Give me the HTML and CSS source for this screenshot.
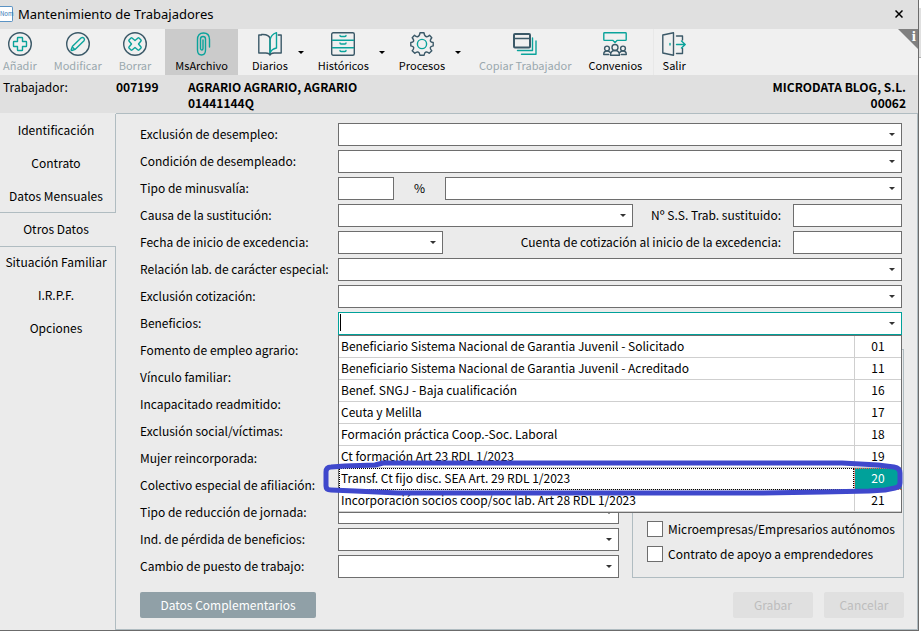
FILE: index.html
```html
<!DOCTYPE html>
<html lang="es">
<head>
    <meta charset="UTF-8">
    <meta name="viewport" content="width=device-width, initial-scale=1.0">
    <title>Mantenimiento de Trabajadores</title>
    <link rel="stylesheet" href="styles.css">
</head>
<body>
    <div class="window">
        <header class="titlebar">
            <span class="app-icon">Nom</span>
            <h1>Mantenimiento de Trabajadores</h1>
            <button class="close" aria-label="Cerrar">
                <svg width="8" height="8" viewBox="0 0 8 8"><path d="M.5.5l7 7M7.500.5l-7 7" stroke="#000" stroke-width="1.500"/></svg>
            </button>
        </header>

        <div class="toolbar">
            <button class="tool" disabled>
                <svg class="icon" viewBox="0 0 24 24"><circle class="dark" cx="12" cy="12" r="11.300"/><path class="teal" d="M10 5.500h4q.5 0 .5.5v3.500H18q.5 0 .5.5v4q0 .5-.5.5h-3.500V18q0 .5-.5.5h-4q-.5 0-.5-.5v-3.500H6q-.5 0-.5-.5v-4q0-.5.5-.5h3.500V6q0-.5.5-.5z"/></svg>
                Añadir
            </button>
            <button class="tool" disabled>
                <svg class="icon" viewBox="0 0 24 24"><circle class="dark" cx="12" cy="12" r="11.300"/><path class="teal" d="M15 6q1.500-1.200 2.800 0t.2 2.800l-8.700 8.500-3.600 1.200q-.7 0-.5-.7l1.300-3.600zM6.800 15.500l2 2"/></svg>
                Modificar
            </button>
            <button class="tool" disabled>
                <svg class="icon" viewBox="0 0 24 24"><circle class="dark" cx="12" cy="12" r="11.300"/><path class="teal" d="M9 6l3 2.500L15 6q.5-.4 1 0l2 2q.4.500 0 1l-2.500 3 2.500 3q.4.500 0 1l-2 2q-.5.400-1 0l-3-2.500L9 18q-.5.400-1 0l-2-2q-.4-.5 0-1l2.500-3L6 9q-.4-.5 0-1l2-2q.5-.4 1 0z"/></svg>
                Borrar
            </button>
            <button class="tool tool-selected">
                <svg class="icon" viewBox="0 0 24 24"><path class="teal" d="M13 8v8.500q0 1.500-1.200 1.500T10.500 16.500V7q0-2.500 2.500-2.500T15.500 7v11q0 5-4 5t-4-5V7.500Q7.500 1 13.500 1t6 6.500V15"/></svg>
                MsArchivo
            </button>
            <div class="tool-group">
                <button class="tool">
                    <svg class="icon" viewBox="0 0 24 24"><path class="dark" d="M3.500 3H.8v18h7q3.700 0 4.200 2.200.5-2.200 4.200-2.200h7V3h-3M3.500 3v-.5q7.500-.5 8.500 4V23"/><path class="teal" d="M12 21V8q1-5.500 6.500-7.300v15.300q-5 1-6.500 5"/></svg>
                    Diarios
                </button>
                <button class="drop" aria-label="Más diarios"></button>
            </div>
            <div class="tool-group">
                <button class="tool">
                    <svg class="icon" viewBox="0 0 24 24"><rect class="dark" x=".7" y=".7" width="22.600" height="22.600" rx="1.500"/><path class="teal" d="M1.500 8.200h21M1.500 15.700h21M9 3.500q0 1 1 1h4q1 0 1-1M9 11q0 1 1 1h4q1 0 1-1M9 18.500q0 1 1 1h4q1 0 1-1"/></svg>
                    Históricos
                </button>
                <button class="drop" aria-label="Más históricos"></button>
            </div>
            <div class="tool-group">
                <button class="tool">
                    <svg class="icon" viewBox="0 0 24 24"><path class="dark" d="M10 .8h4q.4 3.400 2.500 3.900 1.500.2 3-1.500l2.300 2.600q-2 2.400-1.300 3.500.6 1 2.700 1.200v3.400q-2.500.3-2.900 1.600-.3 1.500 1.500 3.200l-2.600 2.600q-1.700-1.700-3.200-1.300-1.600.4-1.900 3.200h-4.200q-.3-2.800-1.900-3.200-1.500-.4-3.200 1.300l-2.600-2.600q1.800-1.700 1.500-3.200-.4-1.300-2.900-1.600v-3.400q2.100-.2 2.700-1.200.7-1.100-1.300-3.500l2.300-2.600q1.500 1.700 3 1.500Q9.600 4.200 10 .8z"/><circle class="teal" cx="12" cy="12" r="4.600"/></svg>
                    Procesos
                </button>
                <button class="drop" aria-label="Más procesos"></button>
            </div>
            <button class="tool tool-copy" disabled>
                <svg class="icon" viewBox="0 0 24 24"><path class="teal" d="M4.500 18.500h15V6M8.500 22.300h14.500V9"/><rect class="dark thick" x="1" y="2" width="16" height="13.500" rx="1"/><path class="dark" d="M1 6.500h16"/></svg>
                Copiar Trabajador
            </button>
            <button class="tool">
                <svg class="icon" viewBox="0 0 24 24"><path class="teal" d="M1.500.8h21q.7 0 .7.700v6q0 .9-.7.900H14l-2 2-2-2H1.500q-.7 0-.7-.9v-6q0-.7.700-.7z"/><g class="dark"><circle cx="12" cy="15.500" r="3"/><circle cx="4" cy="16.500" r="2.400"/><circle cx="20" cy="16.500" r="2.400"/><path d="M7.500 23.300q0-4.800 4.500-4.800t4.500 4.800zM.7 22.500q0-3.500 3.300-3.500 2 0 3 1.200M23.300 22.500q0-3.500-3.300-3.500-2 0-3 1.200M.7 22.500h5M23.300 22.500h-5"/></g></svg>
                Convenios
            </button>
            <button class="tool tool-exit">
                <svg class="icon" viewBox="0 0 24 24"><path class="dark" d="M.8 3L11.500.8v22.400L.8 21zM14.500 4h6v4M14.500 21.500h6v-5"/><path class="teal" d="M14.500 12.500h8.500M19.500 9l3.700 3.500-3.700 3.500M8 11.500v1.500"/></svg>
                Salir
            </button>
            <span class="info-corner">i</span>
        </div>

        <div class="worker">
            <span class="worker-label">Trabajador:</span>
            <strong class="worker-code">007199</strong>
            <strong class="worker-name">AGRARIO AGRARIO, AGRARIO<br>01441144Q</strong>
            <strong class="company">MICRODATA BLOG, S.L.<br>00062</strong>
        </div>

        <div class="main">
            <nav class="tabs">
                <a href="#">Identificación</a>
                <a href="#">Contrato</a>
                <a href="#">Datos Mensuales</a>
                <a href="#" class="active">Otros Datos</a>
                <a href="#">Situación Familiar</a>
                <a href="#">I.R.P.F.</a>
                <a href="#">Opciones</a>
            </nav>

            <form class="panel">
                <div class="row">
                    <label for="exclusionDesempleo">Exclusión de desempleo:</label>
                    <select id="exclusionDesempleo"></select>
                </div>
                <div class="row">
                    <label for="condicion">Condición de desempleado:</label>
                    <select id="condicion"></select>
                </div>
                <div class="row">
                    <label for="minusvalia">Tipo de minusvalía:</label>
                    <input type="text" id="minusvalia" class="percent">
                    <label for="tipoMinusvalia" class="unit">%</label>
                    <select id="tipoMinusvalia"></select>
                </div>
                <div class="row">
                    <label for="causa">Causa de la sustitución:</label>
                    <select id="causa"></select>
                    <label for="ssTrab" class="side-label">Nº S.S. Trab. sustituido:</label>
                    <input type="text" id="ssTrab" class="account">
                </div>
                <div class="row">
                    <label for="fechaExcedencia">Fecha de inicio de excedencia:</label>
                    <select id="fechaExcedencia" class="date"></select>
                    <label for="cuenta" class="side-label far">Cuenta de cotización al inicio de la excedencia:</label>
                    <input type="text" id="cuenta" class="account">
                </div>
                <div class="row">
                    <label for="relacion">Relación lab. de carácter especial:</label>
                    <select id="relacion"></select>
                </div>
                <div class="row">
                    <label for="exclusionCotizacion">Exclusión cotización:</label>
                    <select id="exclusionCotizacion"></select>
                </div>
                <div class="row">
                    <label for="beneficios">Beneficios:</label>
                    <div class="combo">
                        <input type="text" id="beneficios" class="combo-input" role="combobox" aria-expanded="true" aria-controls="listaBeneficios">
                        <div class="dropdown">
                            <table id="listaBeneficios">
                                <tr><td>Beneficiario Sistema Nacional de Garantia Juvenil - Solicitado</td><td>01</td></tr>
                                <tr><td>Beneficiario Sistema Nacional de Garantia Juvenil - Acreditado</td><td>11</td></tr>
                                <tr><td>Benef. SNGJ - Baja cualificación</td><td>16</td></tr>
                                <tr><td>Ceuta y Melilla</td><td>17</td></tr>
                                <tr><td>Formación práctica Coop.-Soc. Laboral</td><td>18</td></tr>
                                <tr><td>Ct formación Art 23 RDL 1/2023</td><td>19</td></tr>
                                <tr class="selected"><td>Transf. Ct fijo disc. SEA Art. 29 RDL 1/2023</td><td>20</td></tr>
                                <tr><td>Incorporación socios coop/soc lab. Art 28 RDL 1/2023</td><td>21</td></tr>
                            </table>
                            <svg class="marker" viewBox="0 0 580 36" preserveAspectRatio="none">
                                <path d="M52 5L22 6 8 7Q3 7 3 12v14q0 4 5 4l24 1 43 2H440l60-1 46-1 16-1 10-2q5-1 5-5V13q0-5-6-6l-16-2-36-2H60z"/>
                            </svg>
                        </div>
                    </div>
                </div>

                <div class="lower">
                    <div class="lower-fields">
                        <div class="row">
                            <label for="fomento">Fomento de empleo agrario:</label>
                            <select id="fomento"></select>
                        </div>
                        <div class="row">
                            <label for="vinculo">Vínculo familiar:</label>
                            <select id="vinculo"></select>
                        </div>
                        <div class="row">
                            <label for="incapacitado">Incapacitado readmitido:</label>
                            <select id="incapacitado"></select>
                        </div>
                        <div class="row">
                            <label for="exclusionSocial">Exclusión social/víctimas:</label>
                            <select id="exclusionSocial"></select>
                        </div>
                        <div class="row">
                            <label for="mujer">Mujer reincorporada:</label>
                            <select id="mujer"></select>
                        </div>
                        <div class="row">
                            <label for="colectivo">Colectivo especial de afiliación:</label>
                            <select id="colectivo"></select>
                        </div>
                        <div class="row">
                            <label for="reduccion">Tipo de reducción de jornada:</label>
                            <select id="reduccion"></select>
                        </div>
                        <div class="row">
                            <label for="perdida">Ind. de pérdida de beneficios:</label>
                            <select id="perdida"></select>
                        </div>
                        <div class="row">
                            <label for="cambio">Cambio de puesto de trabajo:</label>
                            <select id="cambio"></select>
                        </div>
                    </div>
                    <div class="group-box">
                        <label><input type="checkbox">Microempresas/Empresarios autónomos</label>
                        <label><input type="checkbox">Contrato de apoyo a emprendedores</label>
                    </div>
                </div>

                <div class="actions">
                    <button type="button" class="btn btn-extra">Datos Complementarios</button>
                    <button type="submit" class="btn" disabled>Grabar</button>
                    <button type="button" class="btn" disabled>Cancelar</button>
                </div>
            </form>
        </div>
    </div>
    <div class="desktop-edge"></div>
</body>
</html>
```
FILE: styles.css
```css
* {
    box-sizing: border-box;
}

body {
    display: flex;
    align-items: flex-start;
    margin: 0;
    background-color: #fff;
    color: #000;
    font-family: "Noto Sans CJK SC", "Noto Sans", sans-serif;
    font-size: 12px;
    line-height: 16px;
}

button, input, select {
    font: inherit;
    color: inherit;
}

.window {
    flex: 1;
    min-width: 0;
    background-color: #ebebeb;
    border-right: 1px solid #6b6b6b;
    border-bottom: 1px solid #6b6b6b;
}

/* part of the window behind */
.desktop-edge {
    width: 2px;
    height: 50px;
    margin-top: 8px;
    background-color: #e0e0e0;
    border-bottom: 1px solid #b0b0b0;
}

.titlebar {
    display: flex;
    align-items: center;
    height: 29px;
    padding: 0 15px 2px 0;
    background-color: #e0e0e0;
}

.titlebar h1 {
    flex: 1;
    margin: 0 0 0 5px;
    font-family: "Noto Sans", sans-serif;
    font-size: 13px;
    font-weight: normal;
}

.app-icon {
    width: 13px;
    height: 16px;
    background-color: #fff;
    border: 1px solid #5b93c4;
    border-left: none;
    border-radius: 0 2px 2px 0;
    color: #2f77b5;
    font-size: 6px;
    line-height: 13px;
}

.close {
    display: flex;
    padding: 0;
    border: none;
    background: none;
}

.toolbar {
    position: relative;
    display: flex;
    height: 46px;
    padding-left: 3px;
    gap: 17px;
    background-color: #f0f0f0;
    font-size: 11px;
}

.tool {
    display: flex;
    flex-direction: column;
    align-items: center;
    gap: 1px;
    padding: 3px 0 0;
    border: none;
    background: none;
    white-space: nowrap;
}

.tool:disabled {
    color: #9aa8ae;
}

.tool-selected {
    padding: 3px 10px 0;
    margin: 0 -3px;
    background-color: #cbcbcb;
}

.tool-copy {
    margin-left: 4px;
}

.tool-exit {
    margin-left: -6px;
    padding-left: 8px;
    border-left: 1px solid #e8e8e8;
}

.tool-group {
    display: flex;
    gap: 10px;
    margin-right: -3px;
}

.drop {
    align-self: center;
    width: 0;
    height: 0;
    padding: 0;
    border: 3px solid transparent;
    border-top-color: #000;
    border-bottom: none;
    background: none;
}

.icon {
    width: 24px;
    height: 24px;
    fill: none;
    stroke-width: 1.4;
    stroke-linejoin: round;
    stroke-linecap: round;
}

.icon .dark {
    stroke: #3b5968;
}

.icon .teal {
    stroke: #0aa39b;
}

.icon .thick {
    stroke-width: 2;
}

.info-corner {
    position: absolute;
    top: 0;
    right: 0;
    width: 20px;
    height: 20px;
    padding-right: 2px;
    background-color: #808080;
    clip-path: polygon(0 0, 100% 0, 100% 100%);
    color: #fff;
    font-family: "Liberation Serif", serif;
    font-size: 15px;
    font-weight: bold;
    line-height: 14px;
    text-align: right;
}

.worker {
    display: flex;
    height: 38px;
    padding: 4px 12px 0 3px;
    background-color: #e0e0e0;
}

.worker-label {
    width: 113px;
}

.worker-code {
    width: 72px;
}

.company {
    margin-left: auto;
    text-align: right;
}

.main {
    display: flex;
}

.tabs {
    display: flex;
    flex-direction: column;
    width: 116px;
    padding-top: 1px;
}

.tabs::after {
    content: "";
    flex: 1;
    border-right: 1px solid #b0bcc1;
}

.tabs a {
    height: 33px;
    line-height: 32px;
    padding-right: 3px;
    border-right: 1px solid #b0bcc1;
    color: #000;
    text-align: center;
    text-decoration: none;
    white-space: nowrap;
}

.tabs a.active {
    border-right-color: transparent;
    box-shadow: 0 -1px #b0bcc1, 0 1px #b0bcc1;
}

.panel {
    flex: 1;
    min-width: 0;
    display: flex;
    flex-direction: column;
    gap: 4px;
    padding: 9px 13px 11px 24px;
    border: 1px solid #b0bcc1;
    border-left: none;
}

.row {
    display: flex;
    align-items: center;
    height: 23px;
    margin-right: 2px;
}

.row label {
    padding-bottom: 1px;
    white-space: nowrap;
}

.row label:first-child {
    flex: 0 0 198px;
}

.row input,
.row select {
    height: 23px;
    min-width: 0;
    margin: 0;
    padding: 0 4px;
    border: 1px solid #6e6e6e;
    border-radius: 0;
    background-color: #fff;
    outline: none;
}

.row select {
    flex: 1;
    appearance: none;
    background-image: url("data:image/svg+xml,%3Csvg xmlns='http://www.w3.org/2000/svg' width='6' height='3'%3E%3Cpath d='M0 0h6L3 3z' fill='%23333'/%3E%3C/svg%3E");
    background-repeat: no-repeat;
    background-position: right 6px center;
}

.row .percent {
    width: 56px;
}

.row .unit {
    width: 51px;
    text-align: center;
}

.row .account {
    width: 109px;
}

.row .date {
    flex: 0 0 105px;
}

.side-label {
    width: 160px;
    padding-left: 18px;
}

.side-label.far {
    width: auto;
    margin-left: auto;
    padding-right: 12px;
}

.combo {
    position: relative;
    flex: 1;
}

/* text caret and drop arrow */
.row .combo-input {
    display: block;
    width: 100%;
    border-color: #00a19a;
    background-image: linear-gradient(#000, #000), url("data:image/svg+xml,%3Csvg xmlns='http://www.w3.org/2000/svg' width='6' height='3'%3E%3Cpath d='M0 0h6L3 3z' fill='%23333'/%3E%3C/svg%3E");
    background-repeat: no-repeat;
    background-size: 1px 17px, 6px 3px;
    background-position: 1px 1px, right 6px center;
}

.dropdown {
    position: absolute;
    top: 100%;
    left: 0;
    right: 0;
    z-index: 1;
    border: 1px solid #6e6e6e;
    background-color: #fff;
}

.dropdown table {
    width: 100%;
    border-collapse: separate;
    border-spacing: 0;
}

.dropdown td {
    height: 22px;
    padding: 0 2px 2px;
    border-bottom: 1px solid #cfcfcf;
}

.dropdown td:last-child {
    width: 47px;
    border-left: 1px solid #cfcfcf;
    text-align: center;
}

.dropdown .selected td {
    outline: 1px dotted #000;
    outline-offset: -1px;
}

.dropdown .selected td:last-child {
    background-color: #00a19a;
    color: #fff;
    outline-color: #ff5a50;
}

.marker {
    position: absolute;
    top: 124px;
    left: -16px;
    width: calc(100% + 18px);
    height: 36px;
    fill: none;
    stroke: #3f48cc;
    stroke-width: 5;
    stroke-linejoin: round;
}

.lower {
    display: flex;
    gap: 11px;
}

.lower-fields {
    flex: 0 0 481px;
    display: flex;
    flex-direction: column;
    gap: 4px;
}

.group-box {
    flex: 1;
    display: flex;
    flex-direction: column;
    justify-content: flex-end;
    gap: 9px;
    margin-top: 10px;
    padding: 0 0 15px 14px;
    border: 1px solid #b0bcc1;
}

.group-box label {
    display: flex;
    align-items: center;
    gap: 5px;
    white-space: nowrap;
}

.group-box input {
    appearance: none;
    width: 16px;
    height: 16px;
    margin: 0;
    border: 1px solid #6e6e6e;
    background-color: #fff;
}

.actions {
    display: flex;
    gap: 11px;
    margin-top: 10px;
}

.btn {
    width: 80px;
    height: 26px;
    padding: 0 0 1px;
    border: none;
    border-radius: 2px;
    background-color: #e0e0e0;
}

.btn:disabled {
    color: #bdbdbd;
}

.btn-extra {
    width: 176px;
    margin-right: auto;
    background-color: #90a0a7;
    color: #fff;
}
```
